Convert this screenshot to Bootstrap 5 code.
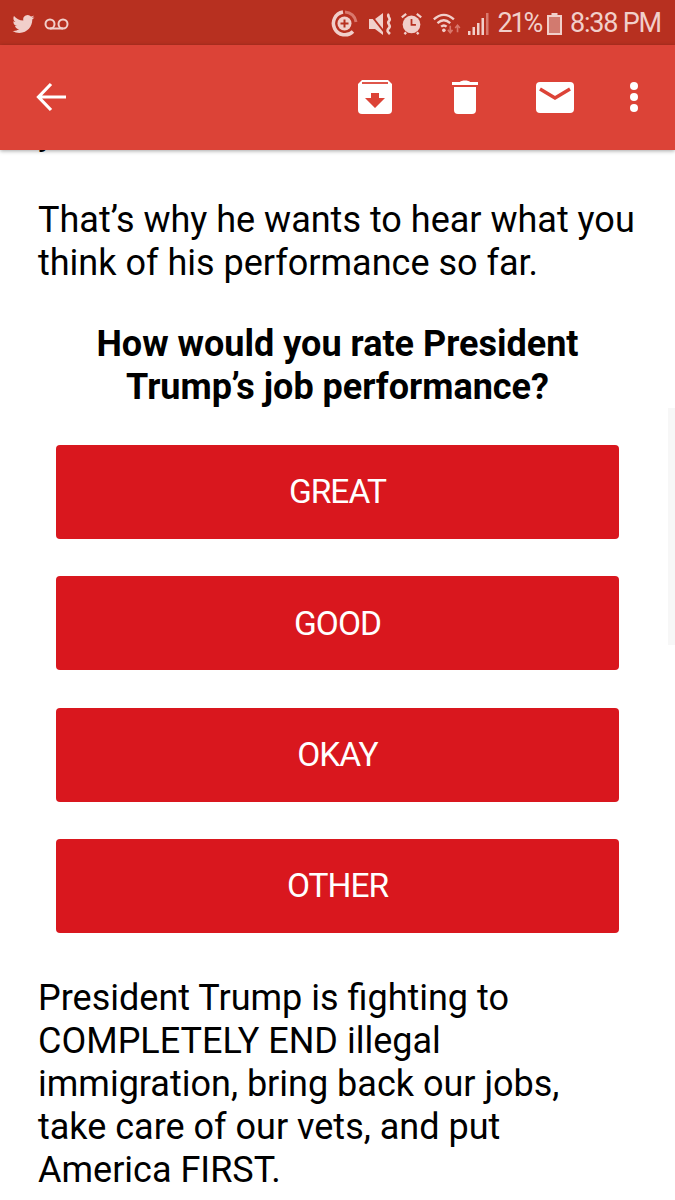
<!DOCTYPE html>
<html lang="en">
<head>
    <meta charset="UTF-8">
    <meta name="viewport" content="width=device-width, initial-scale=1">
    <title>Email</title>
    <link href="https://cdn.jsdelivr.net/npm/bootstrap@5.3.0/dist/css/bootstrap.min.css" rel="stylesheet">
    <style>
        html, body { height: 1200px; overflow: hidden; }
        body { background: #fff; color: #000; font-family: Roboto, "Liberation Sans", sans-serif; position: relative; }
        .status-strip { height: 45px; background: #b73020; color: #f1cfca; padding: 2px 14px 0 11px; font-size: 27px; letter-spacing: -1.2px; }
        .status-strip svg { display: block; flex: none; }
        .status-pct { margin-left: 9px; letter-spacing: -2.2px; }
        .app-strip { height: 105px; background: #dc4337; box-shadow: 0 1px 4px rgba(0,0,0,.35); padding: 0 37px 1px 36px; position: relative; z-index: 2; }
        .app-strip svg { display: block; flex: none; }
        .mail-body { height: 1050px; overflow: hidden; padding: 0 38px; }
        .cut-line { font-size: 36px; line-height: 43px; margin: -39px 0 0; }
        .mail-text { font-size: 36px; line-height: 43px; margin: 0; }
        .mail-lead { margin-top: 45px; }
        .mail-ask { font-size: 36px; line-height: 43px; font-weight: 700; text-align: center; margin: 38px 0 0; }
        .vote-stack { padding: 0 18px; margin-top: 36px; gap: 37.4px; margin-bottom: 44px; }
        .vote-btn { height: 94px; background: #d9171e; border: 0; border-radius: 4px; color: #fff; font-size: 33.5px; letter-spacing: -1px; line-height: 1; display: flex; align-items: center; justify-content: center; padding: 0; }
        .vote-btn:hover { background: #d9171e; color: #fff; }
        .scroll-hint { position: absolute; right: 0; top: 408px; width: 7px; height: 237px; background: #f7f7f7; }
    </style>
</head>
<body>
    <div class="status-strip d-flex align-items-center">
        <svg width="25" height="22" viewBox="0 0 24 24" fill="#f1cfca"><path d="M23.95 4.57a10 10 0 0 1-2.82.77 4.96 4.96 0 0 0 2.16-2.72c-.95.55-2 .95-3.12 1.18a4.92 4.92 0 0 0-8.38 4.48C7.69 8.09 4.07 6.13 1.64 3.16a4.82 4.82 0 0 0-.66 2.47c0 1.71.87 3.21 2.19 4.1a4.9 4.9 0 0 1-2.23-.62v.06a4.92 4.92 0 0 0 3.95 4.83 5 5 0 0 1-2.21.08 4.94 4.94 0 0 0 4.6 3.42A9.87 9.87 0 0 1 0 19.54a14 14 0 0 0 7.56 2.21c9.05 0 14-7.5 14-13.98 0-.21 0-.42-.02-.63a9.94 9.94 0 0 0 2.41-2.57z"/></svg>
        <svg class="ms-2" width="25" height="12" viewBox="0 0 25 12" fill="none" stroke="#f1cfca" stroke-width="2"><circle cx="6" cy="6" r="4.5"/><circle cx="19" cy="6" r="4.5"/><path d="M6 10.5h13"/></svg>
        <div class="ms-auto d-flex align-items-center">
            <svg width="27" height="27" viewBox="0 0 27 27" fill="none" stroke="#f1cfca"><path d="M14 2a11.500 11.500 0 0 1 11 10" stroke="#d9786c" stroke-width="3"/><path d="M22 21.500A11.500 11.500 0 1 1 12 2" stroke-width="3.500"/><circle cx="13.500" cy="13.500" r="7" fill="#f1cfca" stroke="none"/><path d="M13.500 9.500v8M9.500 13.500h8" stroke="#b73020" stroke-width="2"/></svg>
            <svg style="margin-left:11px" width="25" height="22" viewBox="0 0 25 22" fill="#f1cfca"><path d="M0 6h6l8-6v22l-8-6H0z"/><path d="M1 1l15 19" stroke="#b73020" stroke-width="2"/><path d="M20 1c-3 3 3 4 0 7s3 4 0 7-1 4 1 6" fill="none" stroke="#f1cfca" stroke-width="2.600"/></svg>
            <svg style="margin-left:6px" width="23" height="23" viewBox="0 0 24 26"><circle cx="12" cy="14" r="10" fill="#f1cfca"/><path d="M12 8v6.500h5" fill="none" stroke="#b73020" stroke-width="2"/><path d="M1 6l5-4M23 6l-5-4M6 23l-2 2M18 23l2 2" stroke="#f1cfca" stroke-width="2.500"/></svg>
            <svg style="margin-left:9px;margin-top:-1px" width="31" height="21" viewBox="0 0 32 23" fill="none" stroke="#f1cfca" stroke-width="2.500"><path d="M1 7c7-6.500 15-6.500 22 0M5 11c4.500-4 9.500-4 14 0M9 15c2-1.800 4-1.800 6 0"/><circle cx="12" cy="19" r="2" fill="#f1cfca" stroke="none"/><path d="M19 14v7M27 21v-7" stroke="#d9786c" stroke-width="1.800"/><path d="M16.500 18.500l2.500 3 2.500-3M24.500 16.500l2.500-3 2.500 3" stroke="#d9786c" stroke-width="1.800"/></svg>
            <svg style="margin-left:5px" width="21" height="22" viewBox="0 0 21 22" fill="#f1cfca"><rect x="0" y="18" width="2.500" height="4"/><rect x="4.500" y="14" width="2.500" height="8"/><rect x="9" y="10" width="2.500" height="12"/><rect x="13.500" y="5" width="2.500" height="17"/><rect x="18" y="0" width="2.500" height="22" fill="#d9786c"/></svg>
            <span class="status-pct">21%</span>
            <svg style="margin-left:6px" width="15" height="22" viewBox="0 0 15 22"><rect x="4.500" y="0" width="6" height="3" fill="#f1cfca"/><rect x="1" y="3" width="13" height="18" fill="#d27a6f" stroke="#f1cfca" stroke-width="2"/></svg>
            <span class="ms-2">8:38 PM</span>
        </div>
    </div>

    <div class="app-strip d-flex align-items-center">
        <svg width="31" height="30" viewBox="0 0 31 30" fill="none" stroke="#fff" stroke-width="3.200"><path d="M30 15H3M15 2L2.500 15 15 28"/></svg>
        <div class="ms-auto d-flex align-items-center">
            <svg width="34" height="34" viewBox="0 0 34 34"><path d="M4 0h26l4 4v26a4 4 0 0 1-4 4H4a4 4 0 0 1-4-4V4z" fill="#fff"/><path d="M4 3h26" stroke="#dc4337" stroke-width="1.800"/><path d="M13 13h8v5h6L17 28 7 18h6z" fill="#dc4337"/></svg>
            <svg style="margin-left:60px" width="26" height="34" viewBox="0 0 26 34" fill="#fff"><path d="M2 7h22v23a4 4 0 0 1-4 4H6a4 4 0 0 1-4-4z"/><path d="M0 2h8c1-2 9-2 10 0h8v3H0z"/></svg>
            <svg style="margin-left:58px" width="38" height="31" viewBox="0 0 38 31"><rect width="38" height="31" rx="4" fill="#fff"/><path d="M4 7l15 9 15-9" fill="none" stroke="#dc4337" stroke-width="3.500"/></svg>
            <svg style="margin-left:56px" width="8" height="30" viewBox="0 0 8 30" fill="#fff"><circle cx="4" cy="4" r="4"/><circle cx="4" cy="15" r="4"/><circle cx="4" cy="26" r="4"/></svg>
        </div>
    </div>

    <div class="mail-body">
        <p class="cut-line">y</p>
        <p class="mail-text mail-lead">That’s why he wants to hear what you think of his performance so far.</p>
        <p class="mail-ask">How would you rate President<br>Trump’s job performance?</p>
        <div class="vote-stack d-flex flex-column">
            <a class="btn vote-btn" href="#">GREAT</a>
            <a class="btn vote-btn" href="#">GOOD</a>
            <a class="btn vote-btn" href="#">OKAY</a>
            <a class="btn vote-btn" href="#">OTHER</a>
        </div>
        <p class="mail-text">President Trump is fighting to<br>COMPLETELY END illegal<br>immigration, bring back our jobs,<br>take care of our vets, and put<br>America FIRST.</p>
    </div>
    <div class="scroll-hint"></div>
</body>
</html>
